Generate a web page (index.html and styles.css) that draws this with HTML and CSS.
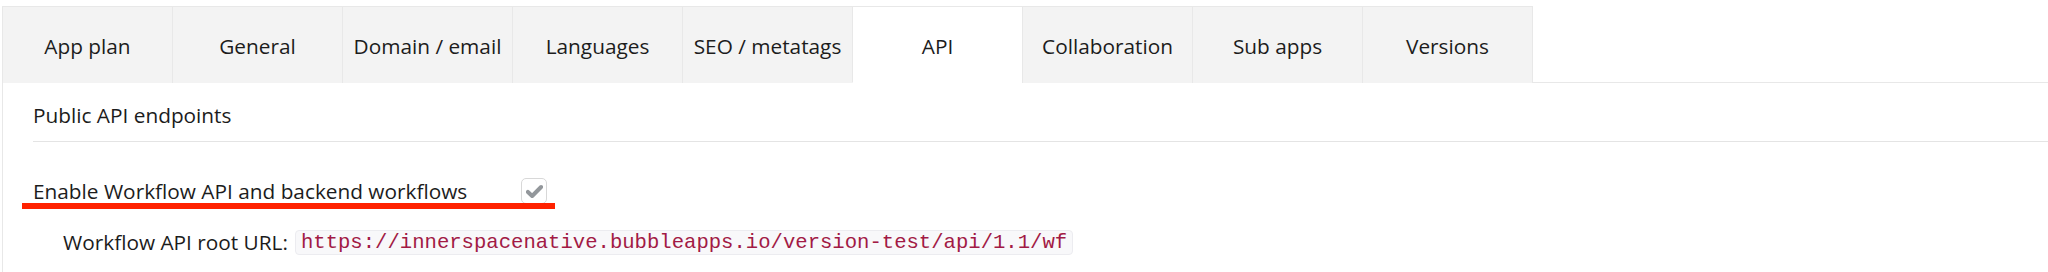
FILE: index.html
```html
<!DOCTYPE html>
<html>
	<head>
		<title>Settings - API</title>
		<meta charset="UTF-8">
		<link rel="stylesheet" href="styles.css">
	</head>
	<body>
		<div id="settings">
			<div class="tabs">
				<div class="tab">App plan</div>
				<div class="tab">General</div>
				<div class="tab">Domain / email</div>
				<div class="tab">Languages</div>
				<div class="tab">SEO / metatags</div>
				<div class="tab active">API</div>
				<div class="tab">Collaboration</div>
				<div class="tab">Sub apps</div>
				<div class="tab last">Versions</div>
			</div>
			<div class="panel">
				<div class="section-title">Public API endpoints</div>
				<div class="option">
					<span class="option-label">Enable Workflow API and backend workflows</span>
					<span class="checkbox">
						<svg width="17" height="15" viewBox="0 0 16 14">
							<path d="M1.8 7.4 L5.8 11.2 L14.2 2.8" fill="none" stroke="#93979b" stroke-width="3.8" stroke-linecap="round" stroke-linejoin="round"/>
						</svg>
					</span>
					<!-- annotation mark drawn over the row -->
					<div class="marker"></div>
				</div>
				<div class="url-row">
					<span>Workflow API root URL:</span>
					<code>https://innerspacenative.bubbleapps.io/version-test/api/1.1/wf</code>
				</div>
			</div>
		</div>
	</body>
</html>
```

FILE: styles.css
```css
body{
	margin: 0;
	background: #fff;
	font-family: "Open Sans", "Noto Sans", sans-serif;
	color: #1c1c1c;
}
#settings{
	padding-top: 6px;
	padding-left: 2px;
}

/* Tabs */
.tabs{
	display: flex;
	border-bottom: 1px solid #e8e8e8;
}
.tab{
	box-sizing: border-box;
	width: 170px;
	height: 77px;
	padding-top: 2px;
	display: flex;
	align-items: center;
	justify-content: center;
	background-color: #f3f3f3;
	border-top: 1px solid #e8e8e8;
	border-left: 1px solid #e8e8e8;
	margin-bottom: -1px;
	font-size: 20.8px;
}
.tab.last{
	width: 171px;
	border-right: 1px solid #e8e8e8;
}
.tab.active{
	background-color: #fff;
	border-bottom: 1px solid #fff;
}

/* Panel */
.panel{
	border-left: 1px solid #e8e8e8;
	padding: 0 0 20px 30px;
	font-size: 20.8px;
}
.section-title{
	padding-top: 18px;
	height: 40px;
	border-bottom: 1px solid #e4e4e4;
}
.option{
	position: relative;
	display: flex;
	align-items: center;
	margin-top: 36px;
	height: 26px;
}
.option-label{
	width: 488px;
}
.checkbox{
	width: 24px;
	height: 24px;
	border: 1px solid #d8d8d8;
	border-radius: 5px;
	display: flex;
	align-items: center;
	justify-content: center;
}
.marker{
	position: absolute;
	left: -11px;
	top: 25px;
	width: 533px;
	height: 6px;
	background-color: #ff2200;
}
.url-row{
	display: flex;
	align-items: center;
	margin-top: 24px;
	padding-left: 30px;
}
.url-row code{
	margin-left: 7px;
	font-family: "Liberation Mono", monospace;
	font-size: 20.6px;
	color: #a21a45;
	background-color: #f8f8fa;
	border: 1px solid #ececf0;
	border-radius: 4px;
	padding: 0 5px;
}
```
